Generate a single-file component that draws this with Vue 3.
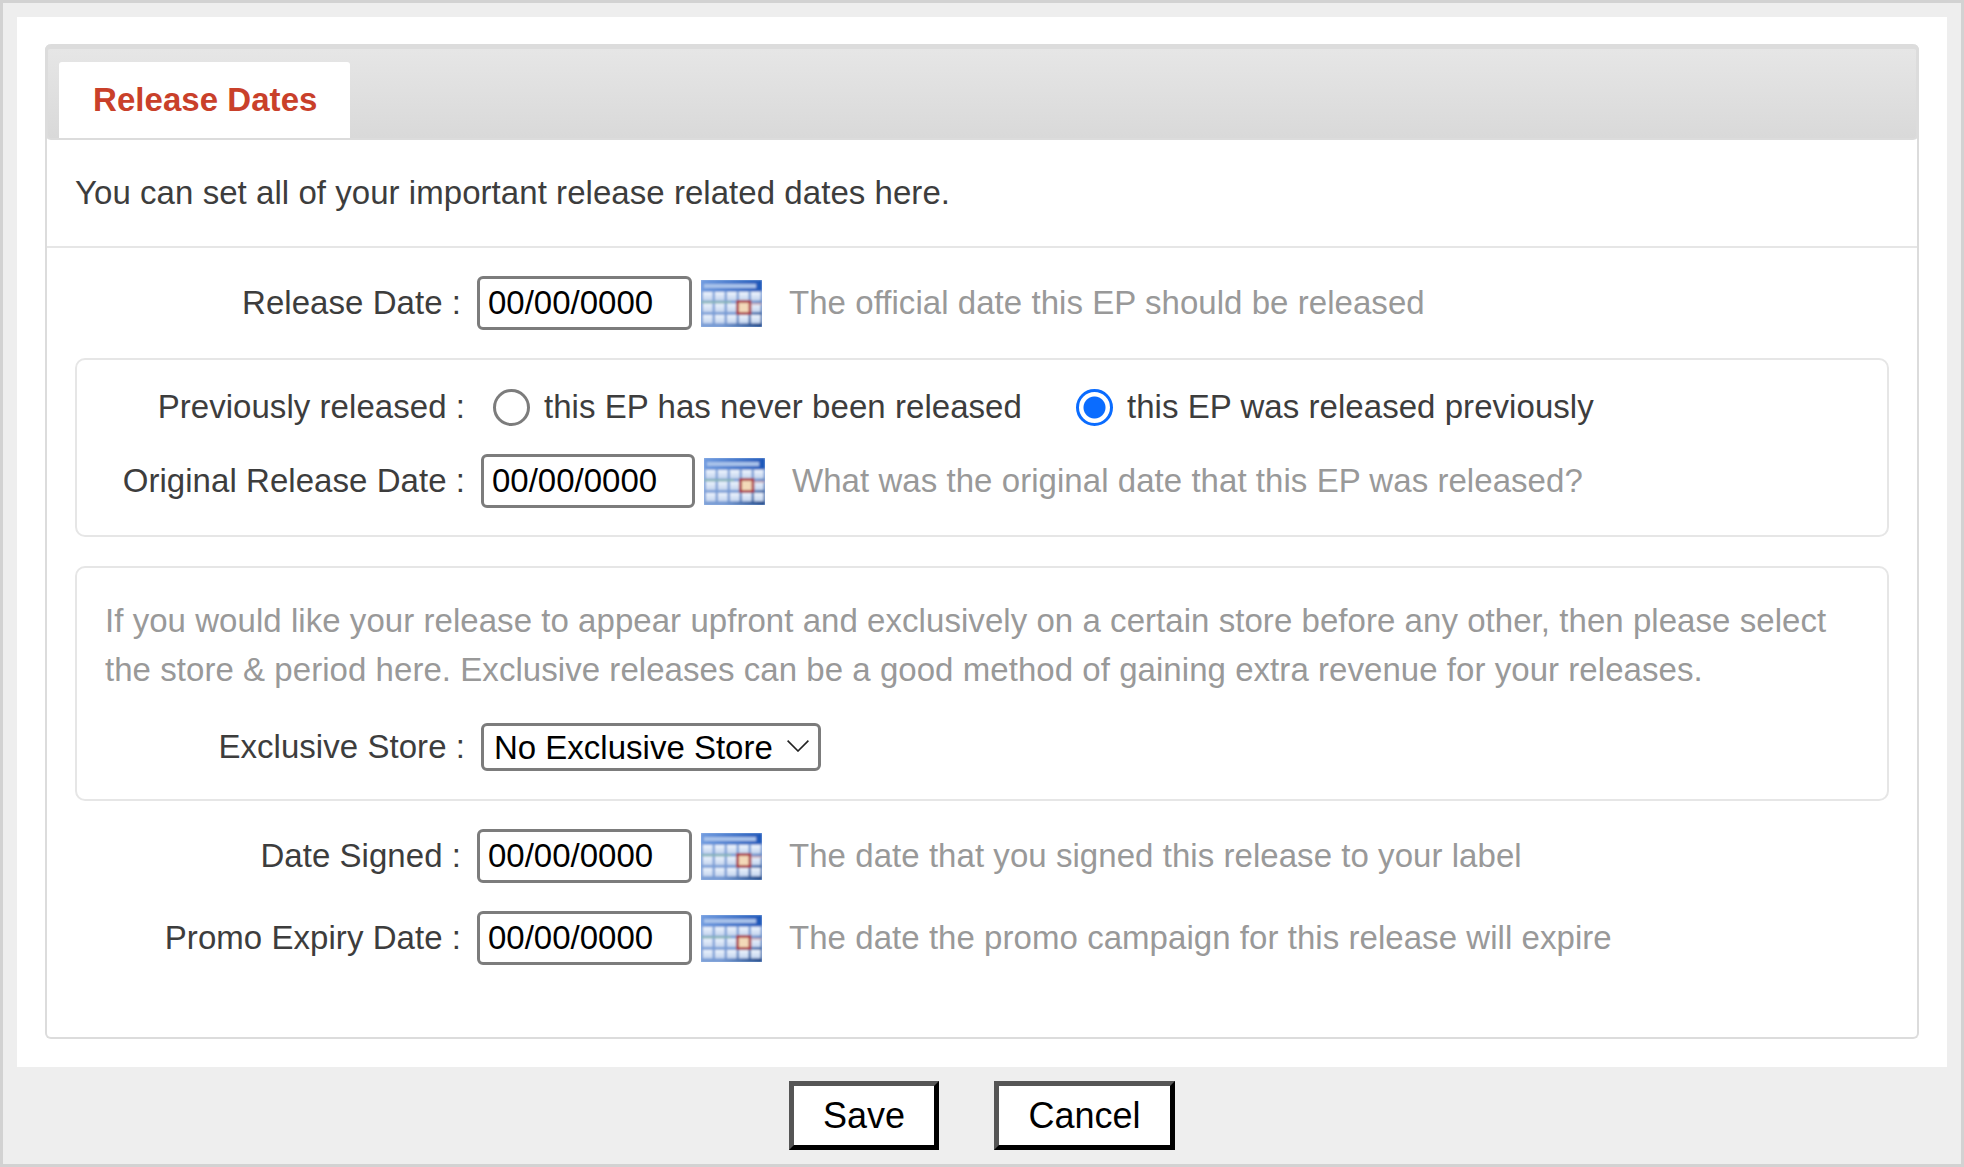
<script setup>
const releaseRows = [
  { label: 'Date Signed :', help: 'The date that you signed this release to your label' },
  { label: 'Promo Expiry Date :', help: 'The date the promo campaign for this release will expire' }
]
const calendarCols = [0, 1, 2, 3, 4]
const calendarRows = [0, 1, 2]
</script>

<template>
  <div class="frame">
    <svg class="sprite" aria-hidden="true">
      <defs>
        <linearGradient id="calBg" x1="0" y1="0" x2="1" y2="1">
          <stop offset="0" stop-color="#86a9de" />
          <stop offset="0.65" stop-color="#7498d2" />
          <stop offset="1" stop-color="#143f80" />
        </linearGradient>
        <linearGradient id="calTop" x1="0" y1="0" x2="1" y2="0">
          <stop offset="0" stop-color="#6f9be0" />
          <stop offset="1" stop-color="#1c56b8" />
        </linearGradient>
        <linearGradient id="calCell" x1="0" y1="0" x2="0" y2="1">
          <stop offset="0" stop-color="#eef4fd" />
          <stop offset="1" stop-color="#c3d4ee" />
        </linearGradient>
        <filter id="calBlur" x="0" y="0" width="100%" height="100%"><feGaussianBlur stdDeviation="1.2" /></filter>
      </defs>
      <symbol id="calIcon" viewBox="0 0 61 47">
        <rect width="61" height="47" fill="#9fbbe6" />
        <g filter="url(#calBlur)">
          <rect width="61" height="47" fill="url(#calBg)" />
          <rect width="61" height="11" fill="url(#calTop)" />
          <rect x="3" y="4" width="52" height="4" fill="#a9c3ea" />
          <template v-for="r in calendarRows" :key="r">
            <rect v-for="c in calendarCols" :key="c" :x="2 + c * 12" :y="12 + r * 11.4" width="9.6" height="8.6" fill="url(#calCell)" />
          </template>
          <rect x="0" y="21.4" width="30" height="1.8" fill="#8fc0a0" opacity="0.75" />
          <rect x="36.5" y="21.5" width="12.5" height="12" fill="#f3d9b8" stroke="#a8303c" stroke-width="2.6" />
          <rect x="50" y="23" width="11" height="2" fill="#c9a3ac" opacity="0.7" />
        </g>
      </symbol>
    </svg>
    <main class="sheet">
      <section class="panel">
        <header class="tabs">
          <div class="tab">Release Dates</div>
        </header>
        <p class="intro">You can set all of your important release related dates here.</p>
        <div class="body">
          <div class="row">
            <label class="label">Release Date :</label>
            <input class="date" value="00/00/0000" />
            <svg class="cal" aria-hidden="true"><use href="#calIcon" /></svg>
            <span class="help">The official date this EP should be released</span>
          </div>

          <div class="box box-prev">
            <div class="row radio-row">
              <label class="label">Previously released :</label>
              <label class="choice first"><input type="radio" name="prev" class="radio" />this EP has never been released</label>
              <label class="choice"><input type="radio" name="prev" class="radio" checked />this EP was released previously</label>
            </div>
            <div class="row orig-row">
              <label class="label">Original Release Date :</label>
              <input class="date" value="00/00/0000" />
              <svg class="cal" aria-hidden="true"><use href="#calIcon" /></svg>
              <span class="help">What was the original date that this EP was released?</span>
            </div>
          </div>

          <div class="box box-store">
            <p class="store-note">If you would like your release to appear upfront and exclusively on a certain store before any other, then please select the store &amp; period here. Exclusive releases can be a good method of gaining extra revenue for your releases.</p>
            <div class="row store-row">
              <label class="label">Exclusive Store :</label>
              <div class="select-wrap">
                <select class="store">
                  <option>No Exclusive Store</option>
                </select>
                <svg class="chev" viewBox="0 0 22 12" aria-hidden="true"><path d="M0.6 0.6 L11 11 L21.4 0.6" fill="none" stroke="#222" stroke-width="1.6" /></svg>
              </div>
            </div>
          </div>

          <div v-for="(item, i) in releaseRows" :key="item.label" class="row" :class="i === 0 ? 'signed-row' : 'promo-row'">
            <label class="label">{{ item.label }}</label>
            <input class="date" value="00/00/0000" />
            <svg class="cal" aria-hidden="true"><use href="#calIcon" /></svg>
            <span class="help">{{ item.help }}</span>
          </div>
        </div>
      </section>
    </main>
    <footer class="actions">
      <button class="btn save">Save</button>
      <button class="btn cancel">Cancel</button>
    </footer>
  </div>
</template>

<style>
html, body { margin: 0; background: #fff; }
</style>

<style scoped>
.sprite { position: absolute; width: 0; height: 0; overflow: hidden; }
.frame {
  box-sizing: border-box;
  width: 1964px;
  height: 1167px;
  border: 3px solid #d2d2d2;
  background: #eeeeee;
  padding: 14px 14px 0;
  font-family: "Liberation Sans", Arial, sans-serif;
  font-size: 33px;
  letter-spacing: 0.05px;
  color: #3d3d3d;
}
.sheet {
  background: #fff;
  height: 1050px;
  box-sizing: border-box;
  padding: 27px 28px 28px;
}
.panel {
  box-sizing: border-box;
  height: 995px;
  border: 2px solid #dcdcdc;
  border-top: 0;
  border-radius: 6px;
}
.tabs {
  box-sizing: border-box;
  height: 96px;
  margin: 0 -2px;
  padding: 13px 0 0 11px;
  border: 3px solid #dcdcdc;
  border-top-width: 5px;
  border-bottom-width: 2px;
  border-radius: 6px;
  background: linear-gradient(#e6e6e6, #d9d9d9);
}
.tab {
  box-sizing: border-box;
  width: 291px;
  height: 76px;
  padding-left: 34px;
  line-height: 76px;
  background: #fff;
  border-radius: 3px 3px 0 0;
  color: #c9402a;
  font-weight: 700;
}
.intro {
  margin: 0;
  box-sizing: border-box;
  height: 108px;
  padding: 30px 0 0 28px;
  line-height: 46px;
  border-bottom: 2px solid #e6e6e6;
}
.body {
  padding: 28px 28px 0;
}
.row {
  display: flex;
  align-items: center;
}
.label {
  flex: none;
  width: 386px;
  text-align: right;
  white-space: nowrap;
}
.date {
  box-sizing: border-box;
  width: 215px;
  height: 54px;
  margin: 0 9px 0 16px;
  padding: 0 8px;
  border: 3px solid #7c7c7c;
  border-radius: 6px;
  background: #fff;
  color: #000;
  font: 33px "Liberation Sans", Arial, sans-serif;
}
.box .date { width: 214px; }
.cal {
  flex: none;
  width: 61px;
  height: 47px;
  margin-right: 27px;
}
.help { color: #999; white-space: nowrap; }
.box {
  box-sizing: border-box;
  border: 2px solid #e6e6e6;
  border-radius: 10px;
}
.box .label { width: 388px; }
.box-prev {
  height: 179px;
  margin-top: 28px;
  padding-top: 22px;
}
.radio-row { height: 50px; }
.orig-row { margin-top: 22px; }
.choice {
  display: flex;
  align-items: center;
  white-space: nowrap;
}
.choice.first { margin: 0 54px 0 28px; }
.radio {
  appearance: none;
  box-sizing: border-box;
  width: 37px;
  height: 37px;
  margin: 0 14px 0 0;
  border: 3px solid #7c7c7c;
  border-radius: 50%;
  background: #fff;
}
.radio:checked {
  border: 3px solid #0a6cff;
  background: radial-gradient(circle, #0a6cff 0 10.5px, #fff 11.5px);
}
.box-store {
  height: 235px;
  margin-top: 29px;
  padding: 28px 28px 0;
}
.store-note {
  margin: 0;
  color: #999;
  line-height: 49px;
}
.store-row { margin: 29px 0 0 -28px; }
.select-wrap {
  position: relative;
  margin-left: 16px;
}
.store {
  appearance: none;
  display: block;
  box-sizing: border-box;
  width: 340px;
  height: 48px;
  padding: 0 0 0 10px;
  border: 3px solid #7c7c7c;
  border-radius: 6px;
  background: #fff;
  color: #000;
  font: 33px "Liberation Sans", Arial, sans-serif;
}
.chev {
  position: absolute;
  right: 12px;
  top: 17px;
  width: 22px;
  height: 12px;
  pointer-events: none;
}
.signed-row { margin-top: 28px; }
.promo-row { margin-top: 28px; }
.actions {
  height: 97px;
  display: flex;
  justify-content: center;
  align-items: flex-start;
  gap: 55px;
  padding-top: 14px;
  box-sizing: border-box;
}
.btn {
  box-sizing: border-box;
  height: 69px;
  padding: 0;
  border: 5px solid;
  border-color: #555 #000 #000 #555;
  background: #fff;
  color: #000;
  font: 36px "Liberation Sans", Arial, sans-serif;
}
.save { width: 150px; }
.cancel { width: 181px; }
</style>
